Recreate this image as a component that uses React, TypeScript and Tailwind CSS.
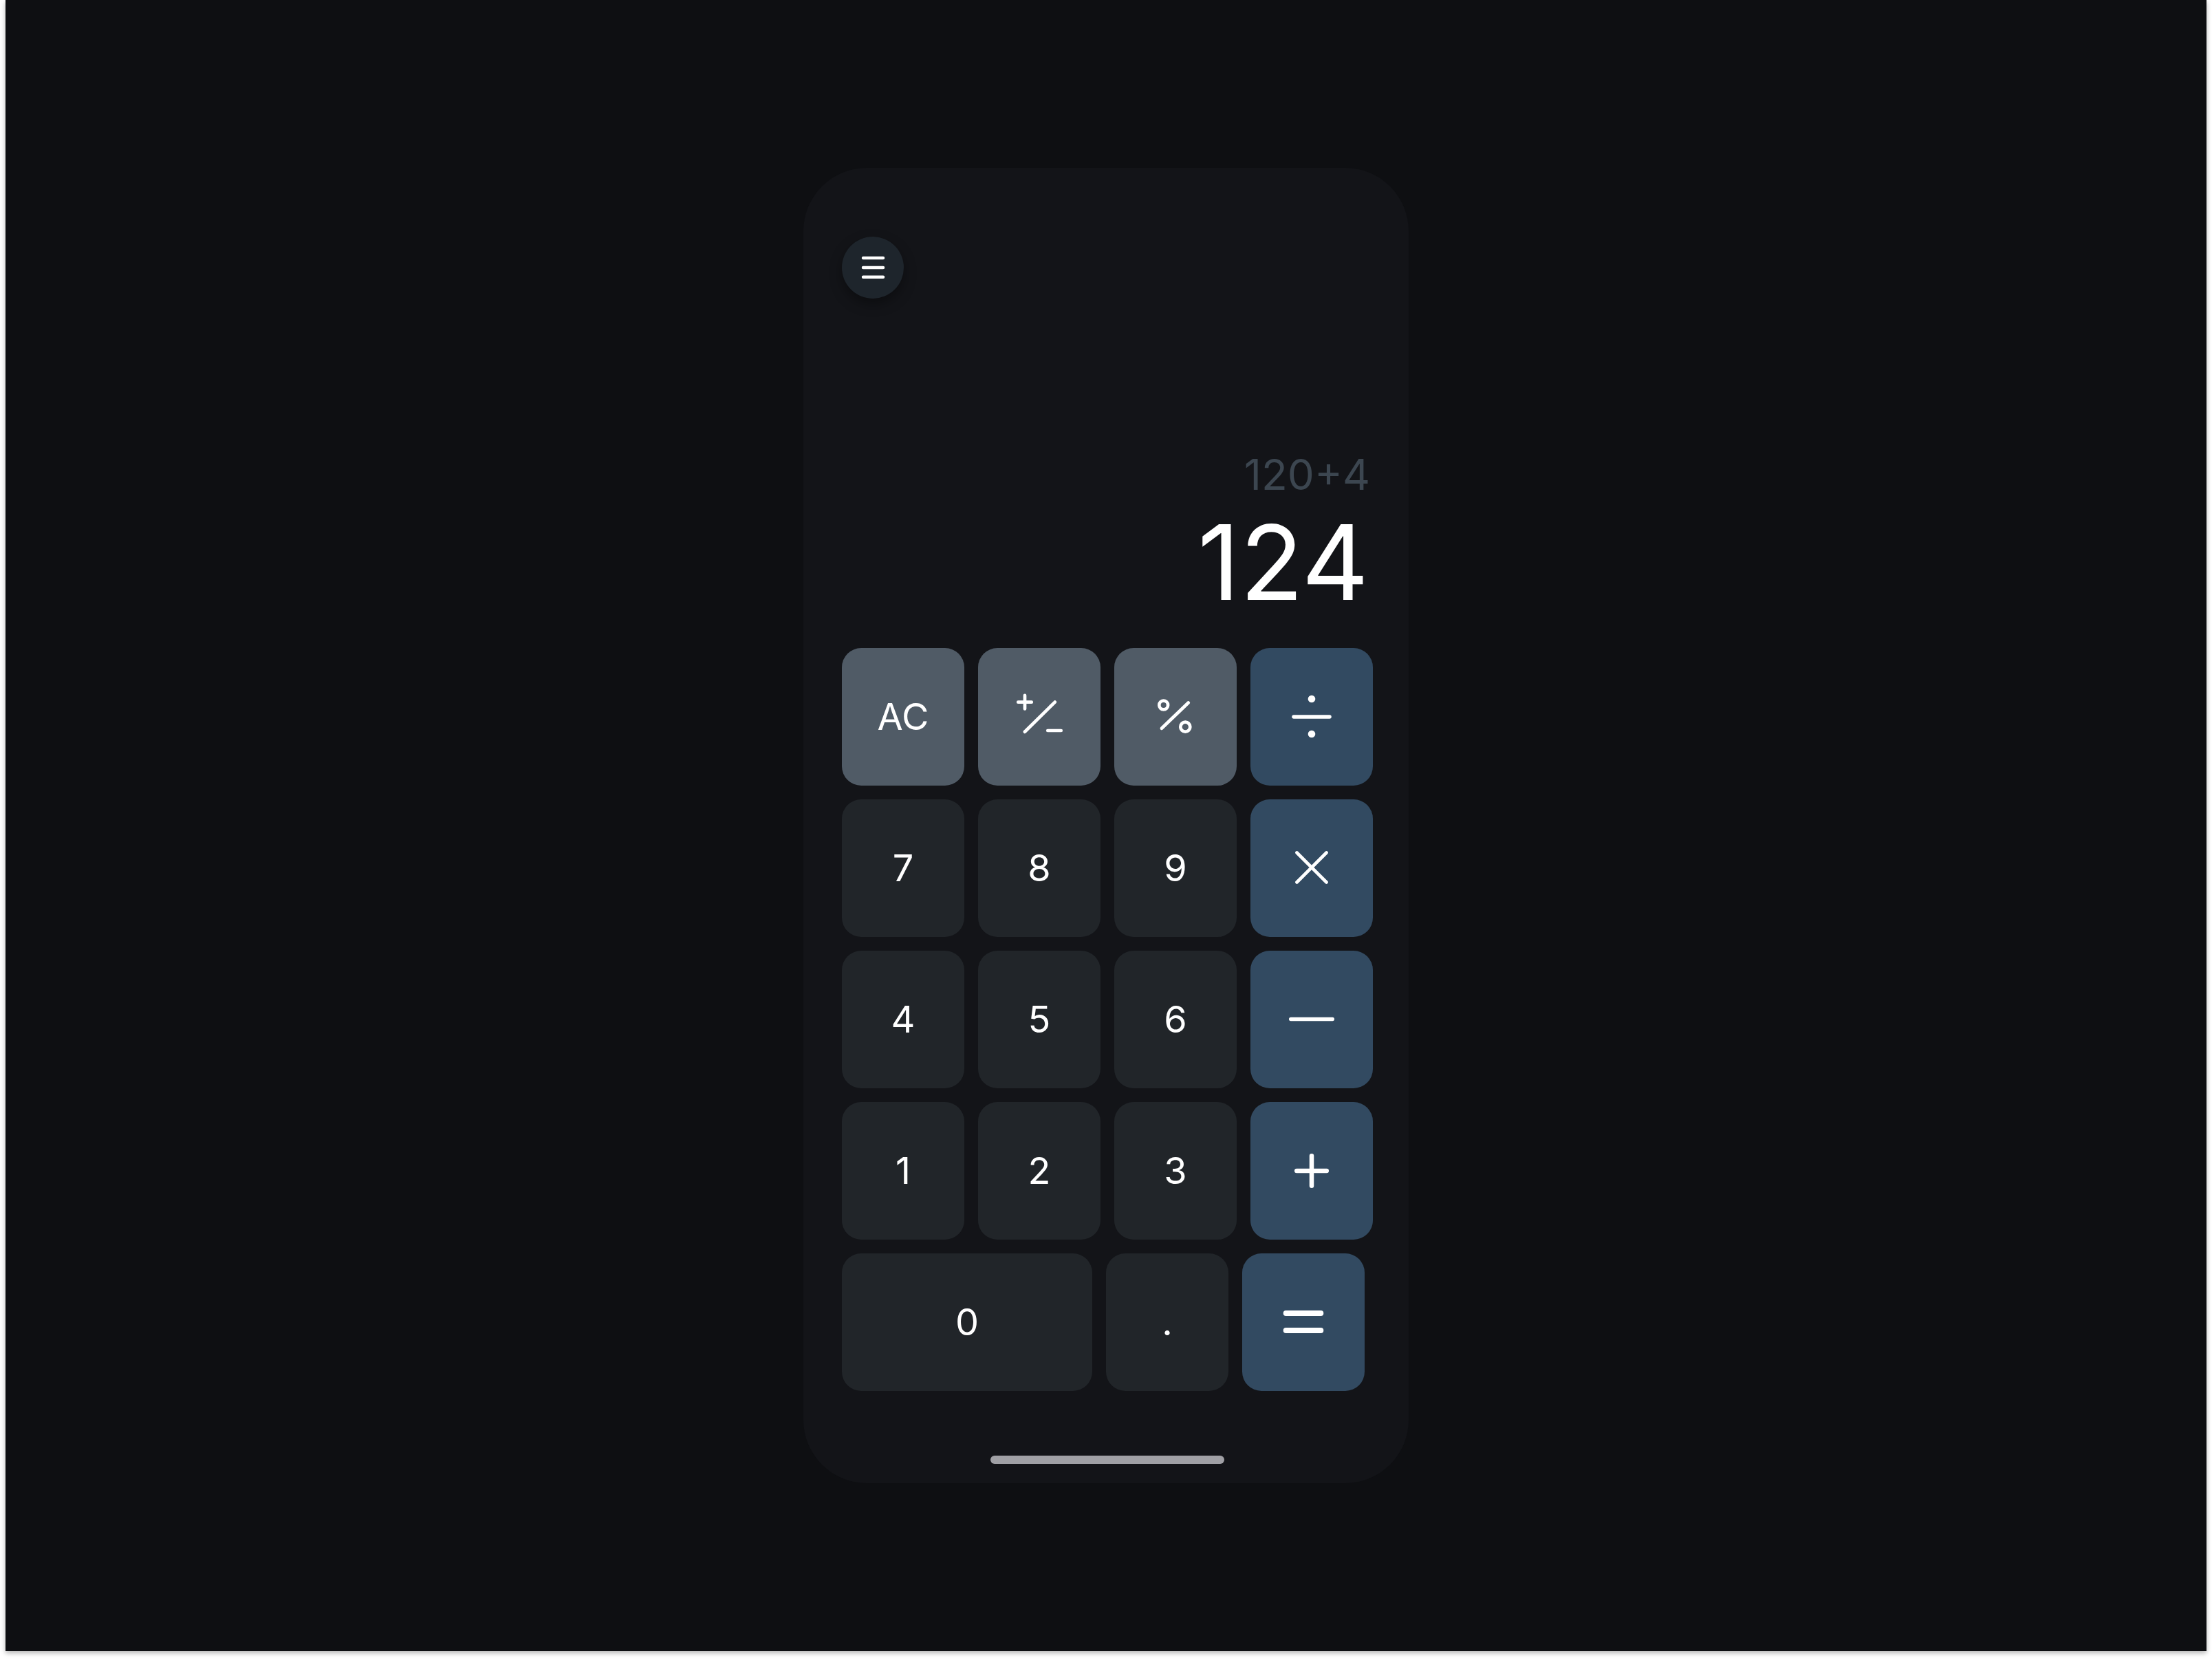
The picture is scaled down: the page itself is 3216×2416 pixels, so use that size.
import type { ReactNode } from "react";

type Key = {
  label: ReactNode;
  tone: "fn" | "op" | "num";
};

const toneClass = {
  fn: "bg-[#505b66]",
  op: "bg-[#324a61]",
  num: "bg-[#212529]",
};

function Glyph({ children }: { children: ReactNode }) {
  return (
    <svg viewBox="0 0 96 96" className="size-[96px]" fill="none" stroke="currentColor" strokeLinecap="round">
      {children}
    </svg>
  );
}

const PlusMinus = (
  <Glyph>
    <g strokeWidth={4.7}>
      <path d="M17.25 26.7H36.75M27 16.95V36.45" />
      <path d="M26.95 69.75L70.75 26.55" />
      <path d="M60.25 68H79.75" />
    </g>
  </Glyph>
);

const Percent = (
  <Glyph>
    <g strokeWidth={4.7}>
      <circle cx="30.7" cy="31" r="6.4" />
      <circle cx="62.3" cy="62.7" r="7" />
      <path d="M27.95 64.75L66.75 27.55" />
    </g>
  </Glyph>
);

const Divide = (
  <Glyph>
    <path d="M22 48H74" strokeWidth={5.5} />
    <circle cx="48" cy="22" r="5.3" fill="currentColor" stroke="none" />
    <circle cx="48" cy="73" r="5.3" fill="currentColor" stroke="none" />
  </Glyph>
);

const Times = (
  <Glyph>
    <path d="M26.5 25.5L69.5 68.5M69.5 25.5L26.5 68.5" strokeWidth={4.7} />
  </Glyph>
);

const Minus = (
  <Glyph>
    <path d="M17.75 47.5H78.25" strokeWidth={5.5} />
  </Glyph>
);

const Plus = (
  <Glyph>
    <path d="M26.25 48H69.75M48 26.25V69.75" strokeWidth={6.5} />
  </Glyph>
);

const Equals = (
  <Glyph>
    <path d="M22.7 35H73.3M22.7 60H73.3" strokeWidth={8} />
  </Glyph>
);

const rows: Key[][] = [
  [
    { label: "AC", tone: "fn" },
    { label: PlusMinus, tone: "fn" },
    { label: Percent, tone: "fn" },
    { label: Divide, tone: "op" },
  ],
  [
    { label: "7", tone: "num" },
    { label: "8", tone: "num" },
    { label: "9", tone: "num" },
    { label: Times, tone: "op" },
  ],
  [
    { label: "4", tone: "num" },
    { label: "5", tone: "num" },
    { label: "6", tone: "num" },
    { label: Minus, tone: "op" },
  ],
  [
    { label: "1", tone: "num" },
    { label: "2", tone: "num" },
    { label: "3", tone: "num" },
    { label: Plus, tone: "op" },
  ],
];

function CalcKey({ k, className }: { k: Key; className?: string }) {
  return (
    <button
      className={`flex h-[200px] items-center justify-center rounded-[28px] text-[54px] font-normal leading-none text-white ${toneClass[k.tone]} ${className ?? ""}`}
    >
      {k.label}
    </button>
  );
}

export default function App() {
  return (
    <div className="h-[2416px] w-[3216px] bg-white font-['Inter',sans-serif]">
      <div className="ml-[8px] flex h-[2400px] w-[3200px] items-center justify-center bg-[#0e0f12] shadow-[0_3px_7px_rgba(0,0,0,0.3)]">
        <div className="flex h-[1912px] w-[880px] flex-col rounded-[92px] bg-[#131418] pl-[56px] pr-[52px] pt-[100px]">
          <button className="flex size-[90px] items-center justify-center rounded-full bg-[#1e252c] text-white shadow-[0_8px_18px_rgba(0,0,0,0.35)]">
            <svg viewBox="0 0 90 90" className="size-[90px]" fill="none" stroke="currentColor" strokeWidth={4.5} strokeLinecap="round">
              <path d="M31 31H60M31 45H60M31 58.7H60" />
            </svg>
          </button>

          <div className="flex flex-1 flex-col items-end justify-end pb-[49px] pr-[6px]">
            <p className="mb-[21px] mr-[-2px] text-[62px] font-normal leading-none text-[#3c4650]">120+4</p>
            <p className="text-[151px] font-normal leading-none text-white">124</p>
          </div>

          <div className="flex flex-col gap-[20px]">
            {rows.map((row, i) => (
              <div key={i} className="grid grid-cols-[repeat(4,178px)] gap-[20px]">
                {row.map((k, j) => (
                  <CalcKey key={j} k={k} />
                ))}
              </div>
            ))}
            <div className="flex gap-[20px]">
              <CalcKey k={{ label: "0", tone: "num" }} className="w-[364px]" />
              <CalcKey k={{ label: ".", tone: "num" }} className="w-[178px]" />
              <CalcKey k={{ label: Equals, tone: "op" }} className="w-[178px]" />
            </div>
          </div>

          <div className="mx-auto mb-[28px] mt-[94px] h-[12px] w-[340px] rounded-full bg-[#a0a0a5]" />
        </div>
      </div>
    </div>
  );
}
